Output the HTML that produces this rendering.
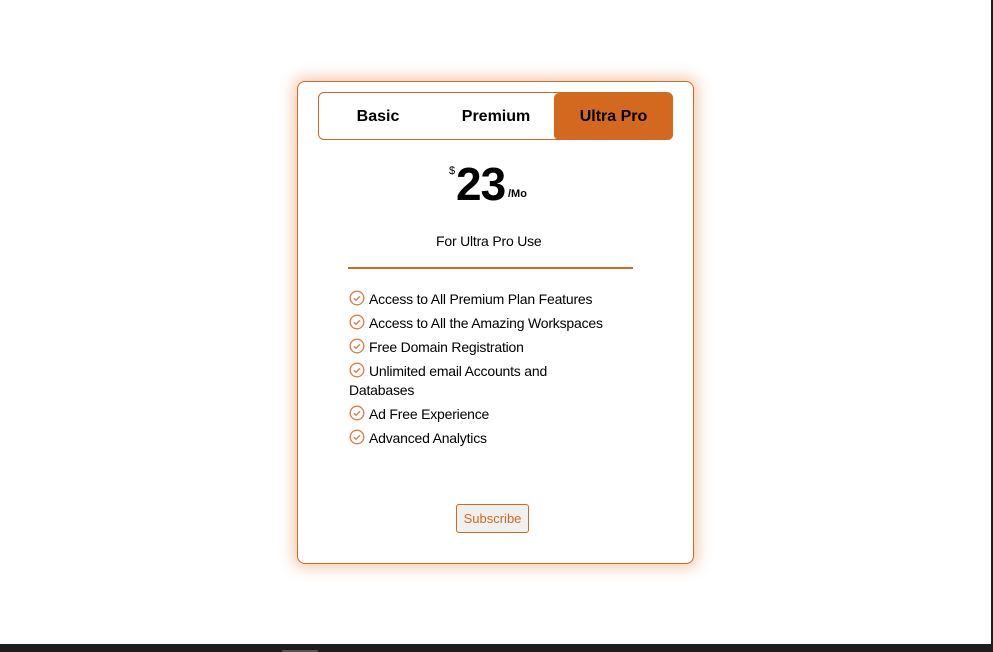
<!DOCTYPE html>
<html><head><meta charset="utf-8"><style>
*{margin:0;padding:0;box-sizing:border-box}
body{width:993px;height:652px;background:#fff;position:relative;overflow:hidden;font-family:"Liberation Sans",sans-serif;color:#000}
.card{position:absolute;left:297px;top:81px;width:397px;height:483px;border:1px solid #d2691e;border-radius:8px;box-shadow:0 0 14px 4px rgba(230,140,80,.45);background:#fff}
.tabs{position:absolute;left:318px;top:92px;width:355px;height:48px;border:1px solid #d2691e;border-radius:6px}
.tab{position:absolute;top:1px;height:46px;line-height:46px;font-weight:bold;font-size:16px;text-align:center}
.act{top:0;background:#d2691e;border-radius:5px;line-height:48px;height:47px}
.t{position:absolute;white-space:nowrap}
ul{position:absolute;left:349px;top:290px;width:290px;list-style:none;font-size:14px;letter-spacing:-.2px;line-height:19px}
li{margin-bottom:5px;position:relative}
li svg{vertical-align:-2px;margin-right:4px}
.btn{position:absolute;left:456px;top:504px;width:73px;height:29px;border:1px solid #d2691e;border-radius:3px;background:#f0f0f0;color:#d2691e;font-size:13px;text-align:center;line-height:27px}
</style></head><body>
<div class="card"></div>
<div class="tabs">
<div class="tab" style="left:0;width:118px">Basic</div>
<div class="tab" style="left:118px;width:118px">Premium</div>
<div class="tab act" style="left:235px;width:119px">Ultra Pro</div>
</div>
<div class="t" style="left:449px;top:165px;font-size:11px">$</div>
<div class="t" style="left:456px;top:157px;font-size:46px;font-weight:bold;letter-spacing:-1px">23</div>
<div class="t" style="left:508px;top:188px;font-size:11px;font-weight:bold">/Mo</div>
<div class="t" style="left:436px;top:233px;font-size:14px;letter-spacing:-.2px">For Ultra Pro Use</div>
<div style="position:absolute;left:348px;top:267px;width:285px;height:2px;background:#d2691e"></div>
<ul>
<li><svg width="16" height="16" viewBox="0 0 16 16"><circle cx="8" cy="8" r="6.8" fill="none" stroke="#d9804a" stroke-width="1.4"/><path d="M4.8 8.2l2.2 2.1 4-4" fill="none" stroke="#d9804a" stroke-width="1.4"/></svg>Access to All Premium Plan Features</li>
<li><svg width="16" height="16" viewBox="0 0 16 16"><circle cx="8" cy="8" r="6.8" fill="none" stroke="#d9804a" stroke-width="1.4"/><path d="M4.8 8.2l2.2 2.1 4-4" fill="none" stroke="#d9804a" stroke-width="1.4"/></svg>Access to All the Amazing Workspaces</li>
<li><svg width="16" height="16" viewBox="0 0 16 16"><circle cx="8" cy="8" r="6.8" fill="none" stroke="#d9804a" stroke-width="1.4"/><path d="M4.8 8.2l2.2 2.1 4-4" fill="none" stroke="#d9804a" stroke-width="1.4"/></svg>Free Domain Registration</li>
<li><svg width="16" height="16" viewBox="0 0 16 16"><circle cx="8" cy="8" r="6.8" fill="none" stroke="#d9804a" stroke-width="1.4"/><path d="M4.8 8.2l2.2 2.1 4-4" fill="none" stroke="#d9804a" stroke-width="1.4"/></svg>Unlimited email Accounts and<br>Databases</li>
<li><svg width="16" height="16" viewBox="0 0 16 16"><circle cx="8" cy="8" r="6.8" fill="none" stroke="#d9804a" stroke-width="1.4"/><path d="M4.8 8.2l2.2 2.1 4-4" fill="none" stroke="#d9804a" stroke-width="1.4"/></svg>Ad Free Experience</li>
<li><svg width="16" height="16" viewBox="0 0 16 16"><circle cx="8" cy="8" r="6.8" fill="none" stroke="#d9804a" stroke-width="1.4"/><path d="M4.8 8.2l2.2 2.1 4-4" fill="none" stroke="#d9804a" stroke-width="1.4"/></svg>Advanced Analytics</li>
</ul>
<div class="btn">Subscribe</div>
<div style="position:absolute;left:991px;top:0;width:2px;height:652px;background:#1e1e1e"></div>
<div style="position:absolute;left:0;top:644px;width:993px;height:8px;background:#1e1e1e"></div>
<div style="position:absolute;left:282px;top:650px;width:36px;height:2px;background:#555"></div>
</body></html>
